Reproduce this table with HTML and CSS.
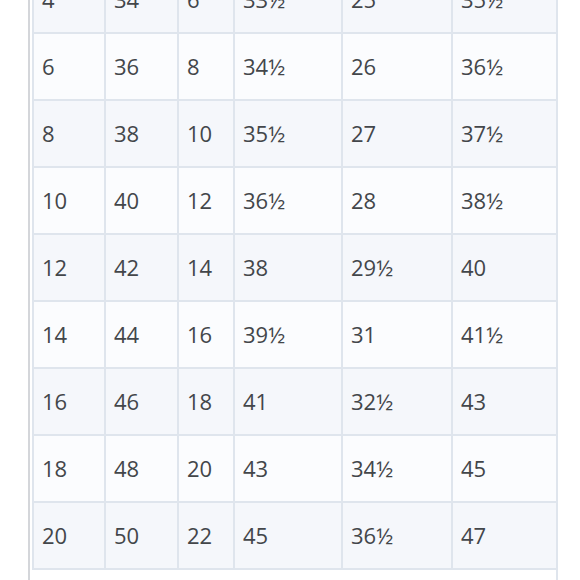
FILE: index.html
```html
<!DOCTYPE html>
<html>
<head>
<meta charset="utf-8">
<link rel="stylesheet" href="styles.css">
</head>
<body>
<div class="sheet">
  <table class="sizes">
    <colgroup>
      <col class="c1"><col class="c2"><col class="c3"><col class="c4"><col class="c5"><col class="c6">
    </colgroup>
    <tbody>
      <tr class="alt"><td>4</td><td>34</td><td>6</td><td>33½</td><td>25</td><td>35½</td></tr>
      <tr><td>6</td><td>36</td><td>8</td><td>34½</td><td>26</td><td>36½</td></tr>
      <tr class="alt"><td>8</td><td>38</td><td>10</td><td>35½</td><td>27</td><td>37½</td></tr>
      <tr><td>10</td><td>40</td><td>12</td><td>36½</td><td>28</td><td>38½</td></tr>
      <tr class="alt"><td>12</td><td>42</td><td>14</td><td>38</td><td>29½</td><td>40</td></tr>
      <tr><td>14</td><td>44</td><td>16</td><td>39½</td><td>31</td><td>41½</td></tr>
      <tr class="alt"><td>16</td><td>46</td><td>18</td><td>41</td><td>32½</td><td>43</td></tr>
      <tr><td>18</td><td>48</td><td>20</td><td>43</td><td>34½</td><td>45</td></tr>
      <tr class="alt"><td>20</td><td>50</td><td>22</td><td>45</td><td>36½</td><td>47</td></tr>
    </tbody>
  </table>
  <div class="tail"></div>
</div>
</body>
</html>
```
FILE: styles.css
```css
html, body {
  margin: 0;
  padding: 0;
  background: #ffffff;
}

body {
  font-family: "Open Sans", "DejaVu Sans", sans-serif;
  color: #43464a;
  overflow: hidden;
  height: 580px;
}

.sheet {
  margin-left: 28px;
  width: 526px;
  border-left: 2px solid #d4d6da;
  margin-top: -33px;
}

.sizes {
  margin-left: 2px;
  width: 524px;
  border-collapse: separate;
  border-spacing: 0;
  table-layout: fixed;
  border-left: 2px solid #dfe5ed;
}

.c1 { width: 72px; }
.c2 { width: 73px; }
.c3 { width: 56px; }
.c4 { width: 108px; }
.c5 { width: 110px; }
.c6 { width: 105px; }

.sizes td {
  padding: 0 0 0 8px;
  height: 65px;
  line-height: 65px;
  font-size: 22px;
  border-right: 2px solid #dfe5ed;
  border-bottom: 2px solid #dfe5ed;
  background: #fbfcfe;
  white-space: nowrap;
}

.sizes tr.alt td {
  background: #f5f7fb;
}

.tail {
  height: 12px;
  margin-left: 2px;
  width: 524px;
  border-right: 2px solid #dfe5ed;
}
```
